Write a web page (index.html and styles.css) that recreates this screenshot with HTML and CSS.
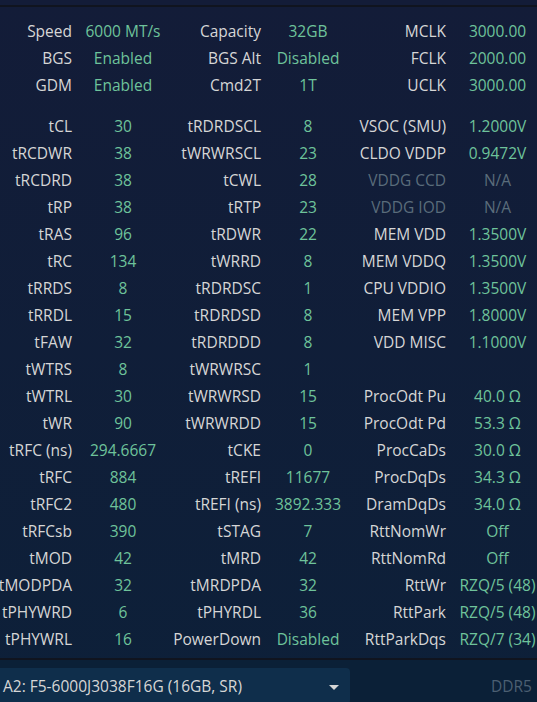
FILE: index.html
```html
<!DOCTYPE html>
<html lang="en">
<head>
  <meta charset="UTF-8">
  <meta name="viewport" content="width=device-width, initial-scale=1.0">
  <title>Memory Timings</title>
  <link rel="stylesheet" href="styles.css">
</head>

<body>
  <div class="panel">
    <div class="grid" id="summary"></div>
    <div class="grid section" id="timings"></div>
  </div>

  <div class="footer">
    <div class="select">
      <span>A2: F5-6000J3038F16G (16GB, SR)</span>
      <span class="caret"></span>
    </div>
    <span class="ddr">DDR5</span>
  </div>

  <script>
    const summary = [
      ['Speed', '6000 MT/s', 'Capacity', '32GB', 'MCLK', '3000.00'],
      ['BGS', 'Enabled', 'BGS Alt', 'Disabled', 'FCLK', '2000.00'],
      ['GDM', 'Enabled', 'Cmd2T', '1T', 'UCLK', '3000.00']
    ];

    const timings = [
      ['tCL', '30', 'tRDRDSCL', '8', 'VSOC (SMU)', '1.2000V'],
      ['tRCDWR', '38', 'tWRWRSCL', '23', 'CLDO VDDP', '0.9472V'],
      ['tRCDRD', '38', 'tCWL', '28', '!VDDG CCD', '!N/A'],
      ['tRP', '38', 'tRTP', '23', '!VDDG IOD', '!N/A'],
      ['tRAS', '96', 'tRDWR', '22', 'MEM VDD', '1.3500V'],
      ['tRC', '134', 'tWRRD', '8', 'MEM VDDQ', '1.3500V'],
      ['tRRDS', '8', 'tRDRDSC', '1', 'CPU VDDIO', '1.3500V'],
      ['tRRDL', '15', 'tRDRDSD', '8', 'MEM VPP', '1.8000V'],
      ['tFAW', '32', 'tRDRDDD', '8', 'VDD MISC', '1.1000V'],
      ['tWTRS', '8', 'tWRWRSC', '1', '', ''],
      ['tWTRL', '30', 'tWRWRSD', '15', 'ProcOdt Pu', '40.0 Ω'],
      ['tWR', '90', 'tWRWRDD', '15', 'ProcOdt Pd', '53.3 Ω'],
      ['tRFC (ns)', '294.6667', 'tCKE', '0', 'ProcCaDs', '30.0 Ω'],
      ['tRFC', '884', 'tREFI', '11677', 'ProcDqDs', '34.3 Ω'],
      ['tRFC2', '480', 'tREFI (ns)', '3892.333', 'DramDqDs', '34.0 Ω'],
      ['tRFCsb', '390', 'tSTAG', '7', 'RttNomWr', 'Off'],
      ['tMOD', '42', 'tMRD', '42', 'RttNomRd', 'Off'],
      ['tMODPDA', '32', 'tMRDPDA', '32', 'RttWr', 'RZQ/5 (48)'],
      ['tPHYWRD', '6', 'tPHYRDL', '36', 'RttPark', 'RZQ/5 (48)'],
      ['tPHYWRL', '16', 'PowerDown', 'Disabled', 'RttParkDqs', 'RZQ/7 (34)']
    ];

    // label cells are even, value cells odd; "!" marks an unavailable reading
    function fill(id, rows) {
      const grid = document.getElementById(id);
      let html = '';
      rows.forEach(row => {
        row.forEach((text, i) => {
          let cls = i % 2 === 0 ? 'label' : 'value';
          if (text.startsWith('!')) {
            text = text.slice(1);
            cls += ' dim';
          }
          html += `<div class="${cls}"><span>${text}</span></div>`;
        });
      });
      grid.innerHTML = html;
    }

    fill('summary', summary);
    fill('timings', timings);
  </script>
</body>
</html>
```

FILE: styles.css
```css
html,
body {
  margin: 0;
  padding: 0;
  height: 100%;
}

body {
  font-family: "Open Sans", "Noto Sans", sans-serif;
  font-size: 15.5px;
  color: #d6d6d6;
  background: linear-gradient(#131c38 0%, #0d2039 100%);
  overflow: hidden;
  padding-top: 5px;
  box-sizing: border-box;
}

.panel {
  border-top: 2px solid #10141f;
  border-bottom: 2px solid #10141f;
  padding: 11px 0 5px;
  overflow: hidden;
}

.grid {
  display: grid;
  grid-template-columns: 77px 92px 97px 84px 101px 93px;
  grid-auto-rows: 27px;
  line-height: 27px;
  width: 544px;
}

.section {
  margin-top: 14px;
}

.label {
  display: flex;
  justify-content: flex-end;
  padding-right: 5px;
  white-space: nowrap;
  color: #d6d6d6;
}

.value {
  text-align: center;
  white-space: nowrap;
  color: #6ec39b;
}

.dim {
  color: #5a6c7b;
}

.footer {
  display: flex;
  align-items: center;
  justify-content: space-between;
  padding-top: 8px;
  background-color: #0b2037;
  height: 60px;
}

.select {
  width: 347px;
  height: 36px;
  padding-left: 3px;
  display: flex;
  align-items: center;
  justify-content: space-between;
  background-color: #0f2e4b;
  border-radius: 0 4px 4px 0;
  color: #d6d6d6;
  align-self: flex-start;
}

.caret {
  width: 0;
  height: 0;
  border-left: 5px solid transparent;
  border-right: 5px solid transparent;
  border-top: 5px solid #d6d6d6;
  margin-right: 11px;
  margin-top: 2px;
}

.ddr {
  color: #4b5f72;
  margin-right: 5px;
  align-self: flex-start;
  line-height: 36px;
}
```
